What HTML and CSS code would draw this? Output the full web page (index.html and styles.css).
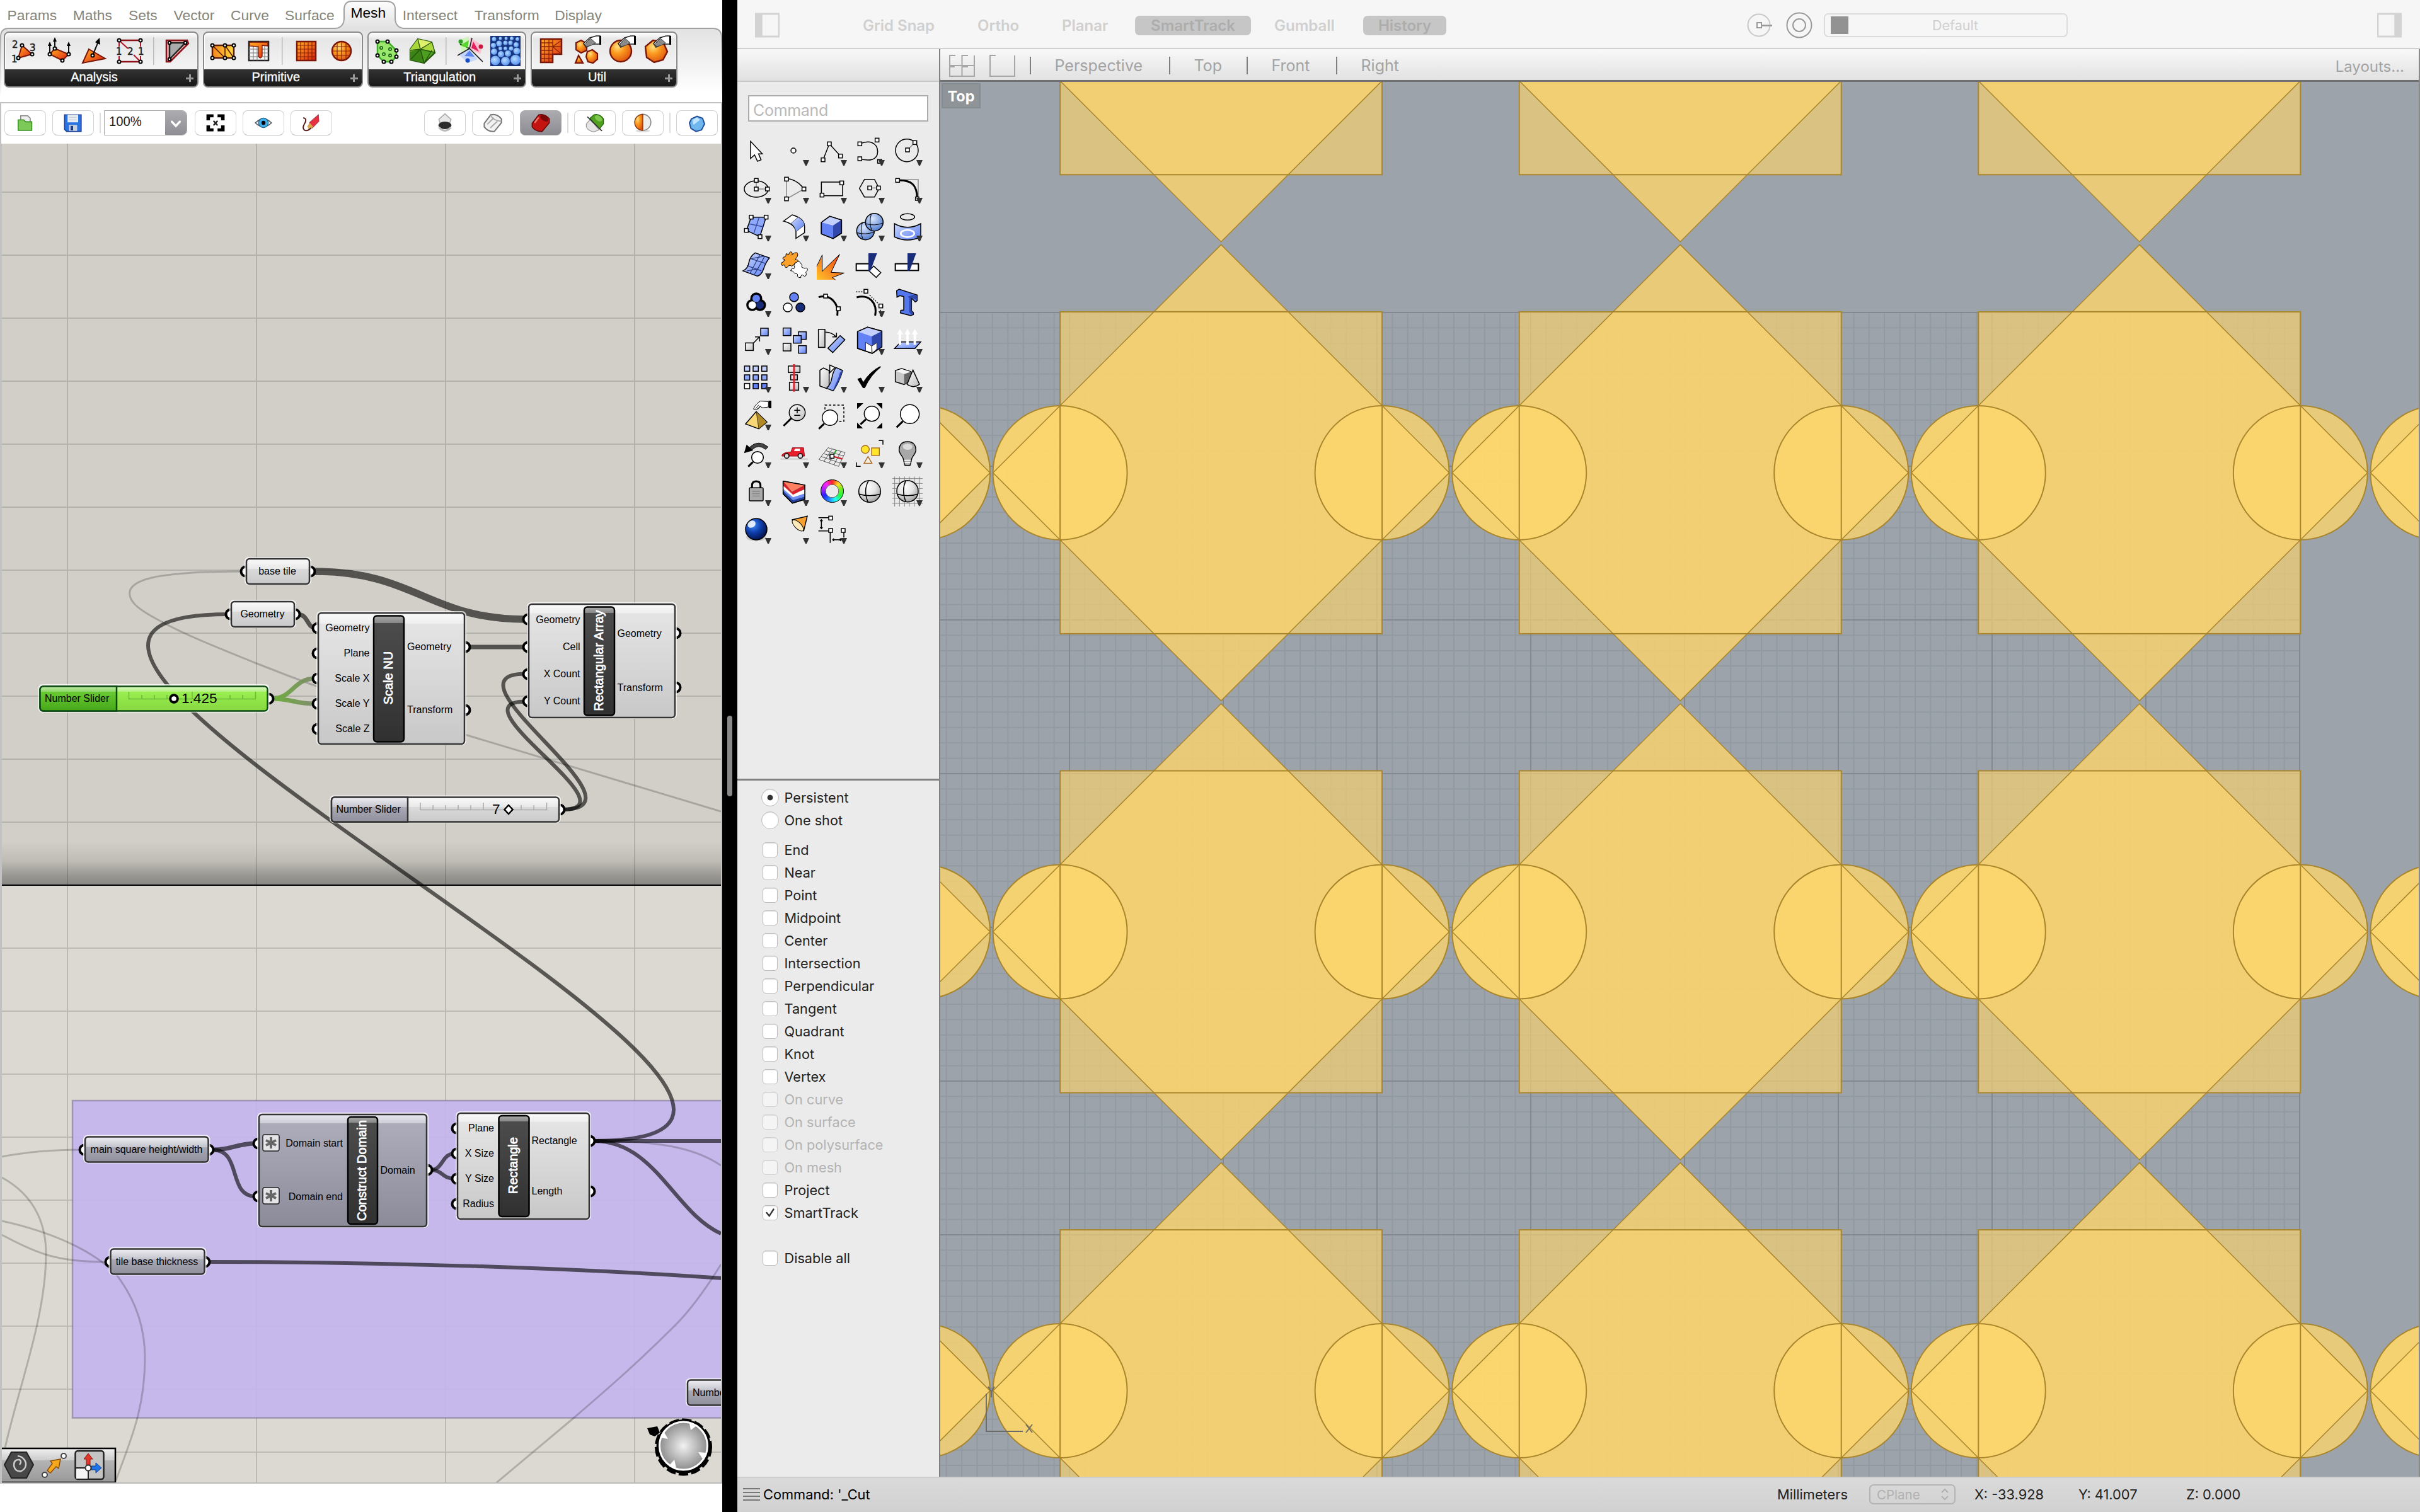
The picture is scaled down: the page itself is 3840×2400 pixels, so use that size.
FILE: index.html
```html
<!DOCTYPE html>
<html lang="en">
<head>
<meta charset="utf-8">
<title>Grasshopper and Rhino</title>
<link rel="stylesheet" href="styles.css">
</head>
<body>
<svg class="defs" width="0" height="0" aria-hidden="true">
  <defs>
    <linearGradient id="fire" x1="0" y1="0" x2="1" y2="1"><stop offset="0" stop-color="#ffb020"/><stop offset=".5" stop-color="#f0691c"/><stop offset="1" stop-color="#d81e10"/></linearGradient>
    <linearGradient id="gold" x1="0" y1="0" x2="1" y2="0"><stop offset="0" stop-color="#f5861f"/><stop offset="1" stop-color="#ffd83a"/></linearGradient>
    <radialGradient id="egg" cx=".35" cy=".3" r=".8"><stop offset="0" stop-color="#ffdf80"/><stop offset=".4" stop-color="#fb9a1e"/><stop offset="1" stop-color="#d9480f"/></radialGradient>
    <radialGradient id="bubble" cx=".4" cy=".4" r=".7"><stop offset="0" stop-color="#b5dcff"/><stop offset="1" stop-color="#4f8bf0"/></radialGradient>
    <linearGradient id="blue" x1="0" y1="0" x2="1" y2="1"><stop offset="0" stop-color="#cdd9ff"/><stop offset="1" stop-color="#5b7ff2"/></linearGradient>
    <linearGradient id="grey" x1="0" y1="0" x2="1" y2="1"><stop offset="0" stop-color="#fff"/><stop offset="1" stop-color="#bdbdbd"/></linearGradient>
    <radialGradient id="ball" cx=".4" cy=".3" r=".75"><stop offset="0" stop-color="#fff"/><stop offset=".5" stop-color="#e4e4e4"/><stop offset="1" stop-color="#999"/></radialGradient>
    <radialGradient id="bball" cx=".4" cy=".3" r=".75"><stop offset="0" stop-color="#dce8ff"/><stop offset="1" stop-color="#4a78cc"/></radialGradient>
    <radialGradient id="navy" cx=".35" cy=".3" r=".75"><stop offset="0" stop-color="#3f8bff"/><stop offset=".5" stop-color="#0e3da8"/><stop offset="1" stop-color="#020f44"/></radialGradient>
    <g id="hand"><path d="M0 12L10 3L20 0H26V13H14L4 18Z" fill="#fff" stroke="#222" stroke-width="1.5"/><path d="M3 12L11 4L19 11L12 15L4 17Z" fill="#8a8a8a" stroke="#444" stroke-width="1"/><path d="M25 0H28V14H25Z"/></g>
  </defs>
</svg>

<section class="gh">
  <header class="gh-head">
    <svg class="ribbon-shape" viewBox="0 0 1146 162">
      <defs><linearGradient id="rib" x1="0" y1="0" x2="0" y2="1"><stop offset="0" stop-color="#fdfdfd"/><stop offset=".28" stop-color="#e2e2e2"/><stop offset=".95" stop-color="#fff"/></linearGradient>
      <linearGradient id="ribs" x1="0" y1="0" x2="0" y2="1"><stop offset=".3" stop-color="#a2a2a2"/><stop offset="1" stop-color="#fff"/></linearGradient></defs>
      <path d="M1 155V57Q2 45 14 45H532Q545 44 546 30V14Q547 2 558 2H614Q627 3 627 14V30Q628 44 641 45H1132Q1145 46 1145 59V155" fill="url(#rib)" stroke="url(#ribs)" stroke-width="2"/>
    </svg>
    <nav class="tabs"><span>Params</span><span>Maths</span><span>Sets</span><span>Vector</span><span>Curve</span><span>Surface</span><span class="on">Mesh</span><span>Intersect</span><span>Transform</span><span>Display</span></nav>
    <div class="panels">
      <div class="panel p1"><div class="icons">
        <svg viewBox="0 0 56 58"><path d="M25 20L41 34L19 40Z" fill="url(#fire)" stroke="#7a1608" stroke-width="2"/><g class="dot"><circle cx="25" cy="20" r="2.5"/><circle cx="41" cy="34" r="2.5"/><circle cx="19" cy="40" r="2.5"/></g><g class="num"><text x="9" y="24">2</text><text x="37" y="29">3</text><text x="8" y="47">1</text></g></svg>
        <svg viewBox="0 0 56 58"><path d="M13 34L21 25L43 34L33 44Z" fill="url(#fire)" stroke="#7a1608" stroke-width="2"/><path d="M13 33V19M21 24V11M43 33V19" stroke="#111" stroke-width="2"/><path d="M10 21L13 14L16 21ZM18 14L21 7L24 14ZM40 21L43 14L46 21Z"/><g class="dot"><circle cx="13" cy="34" r="2.5"/><circle cx="21" cy="25" r="2.5"/><circle cx="43" cy="34" r="2.5"/><circle cx="33" cy="44" r="2.5"/></g></svg>
        <svg viewBox="0 0 56 58"><path d="M19 26L45 41L9 48Z" fill="url(#fire)" stroke="#7a1608" stroke-width="2"/><path d="M25 36L34 14" stroke="#111" stroke-width="2"/><path d="M36 8L37 19L29 15Z"/><g class="dot"><circle cx="25" cy="36" r="2.5"/></g></svg>
        <svg viewBox="0 0 56 58"><path d="M11 12H45M11 46H45" stroke="#8c1018" stroke-width="2.5"/><path d="M11 15V22M11 37V46M45 15V22M45 37V46M13 14L25 25M34 35L44 45" stroke="#b0182a" stroke-width="2" fill="none"/><g class="num"><text x="6" y="35">1</text><text x="24" y="35">2</text><text x="41" y="35">1</text></g><g class="dot"><circle cx="11" cy="12" r="2.5"/><circle cx="45" cy="12" r="2.5"/><circle cx="11" cy="46" r="2.5"/><circle cx="45" cy="46" r="2.5"/></g></svg>
        <i class="sep"></i>
        <svg viewBox="0 0 56 58"><path d="M11 12H44L46 17L17 46H11Z" fill="#f4b8b8" stroke="#8c1018" stroke-width="2.5"/><path d="M16 16H41L16 42Z" fill="#aaa" stroke="#222" stroke-width="2.5"/><g class="dot"><circle cx="16" cy="16" r="2.3"/><circle cx="41" cy="16" r="2.3"/><circle cx="16" cy="42" r="2.3"/></g></svg>
      </div><div class="cap">Analysis<b></b></div></div>
      <div class="panel p2"><div class="icons">
        <svg viewBox="0 0 56 58"><path d="M11 20H45V40H11Z" fill="url(#gold)" stroke="#5a1a08" stroke-width="2.5"/><path d="M31 20V40M11 20L31 40M31 20L45 40" stroke="#5a1a08" stroke-width="1.6"/><g class="dot"><circle cx="11" cy="20" r="2.5"/><circle cx="31" cy="20" r="2.5"/><circle cx="45" cy="20" r="2.5"/><circle cx="11" cy="40" r="2.5"/><circle cx="31" cy="40" r="2.5"/><circle cx="45" cy="40" r="2.5"/></g></svg>
        <svg viewBox="0 0 56 58"><path d="M13 14H44V44H13Z" fill="#f4f4f4" stroke="#222" stroke-width="2.5"/><path d="M20 14V44M26 14V44M38 14V44M13 26H44M13 32H44M13 38H44" stroke="#777"/><path d="M14 15H43V21L34 20V37Q31 43 28 37V22L14 21Z" fill="url(#fire)" stroke="#7a1608" stroke-width="1.3"/></svg>
        <i class="sep"></i>
        <svg viewBox="0 0 56 58"><path d="M14 14H44V44H14Z" fill="url(#fire)" stroke="#7a1608" stroke-width="2.5"/><path d="M20 14V44M26 14V44M32 14V44M38 14V44M14 20H44M14 26H44M14 32H44M14 38H44" stroke="#8a2408" stroke-width="1.2"/></svg>
        <svg viewBox="0 0 56 58"><circle cx="29" cy="29" r="15" fill="url(#egg)" stroke="#7a1608" stroke-width="2.5"/><path d="M22 16V42M29 14V44M36 16V42M16 22H42M14 29H44M16 36H42" stroke="#8a2408" stroke-width="1.2"/></svg>
      </div><div class="cap">Primitive<b></b></div></div>
      <div class="panel p3"><div class="icons">
        <svg viewBox="0 0 56 58"><path d="M12 14H28L42 28V38L34 46H22L12 36Z" fill="#9be86d" stroke="#3fae2a" stroke-width="2.5"/><g class="dot"><circle cx="12" cy="14" r="2.5"/><circle cx="28" cy="14" r="2.5"/><circle cx="42" cy="28" r="2.5"/><circle cx="42" cy="38" r="2.5"/><circle cx="34" cy="46" r="2.5"/><circle cx="22" cy="46" r="2.5"/><circle cx="12" cy="36" r="2.5"/></g><g fill="#d9ffc6" stroke="#207018" stroke-width="2"><circle cx="18" cy="24" r="2"/><circle cx="32" cy="26" r="2"/><circle cx="22" cy="34" r="2"/><circle cx="32" cy="36" r="2"/></g></svg>
        <svg viewBox="0 0 56 58"><path d="M20 10L42 15L47 32L30 48L8 43V26Z" fill="#4da01f" stroke="#24520c" stroke-width="2.2"/><path d="M20 10L42 15L24 26Z" fill="#dff06a"/><path d="M20 10L24 26L8 30V26ZM42 15L46 30L24 26Z" fill="#a9d63a"/><path d="M8 30L24 26L30 48L8 43Z" fill="#3c8416"/><path d="M20 10L24 26L42 15M8 28L24 26L46 31M24 26L30 48L42 28M24 26L9 42" fill="none" stroke="#24520c" stroke-width="1.3"/></svg>
        <i class="sep"></i>
        <svg viewBox="0 0 56 58"><path d="M10 12L26 6V26L14 30Z" fill="#cdf5b8"/><path d="M28 8L48 20L44 34L28 26Z" fill="#f9c0d0"/><path d="M10 34L26 26L40 42L24 48Z" fill="#c4d6fb"/><path d="M27 25L12 18M27 25L31 8M27 25L48 46M27 25L8 36" stroke="#222" stroke-width="1.6"/><path d="M12 20L24 24L26 12Z" fill="#58d42f"/><path d="M30 24L33 14L42 30Z" fill="#e6205c"/><path d="M19 37L27 28L35 38Z" fill="#5b86ee"/><circle cx="13" cy="14" r="3.5" fill="#2d9c22"/><circle cx="45" cy="22" r="3.5" fill="#c81840"/><circle cx="24" cy="44" r="3.5" fill="#184cc0"/></svg>
        <svg viewBox="0 0 56 58"><path d="M4 5H52V53H4Z" fill="#17347c"/><g fill="url(#bubble)"><circle cx="12" cy="44" r="7.5"/><circle cx="28" cy="45" r="7"/><circle cx="44" cy="43" r="8"/><circle cx="10" cy="30" r="5"/><circle cx="21" cy="34" r="5"/><circle cx="32" cy="33" r="5"/><circle cx="46" cy="29" r="5.5"/><circle cx="37" cy="25" r="3.5"/><circle cx="28" cy="25" r="3"/><circle cx="20" cy="25" r="3"/><circle cx="9" cy="20" r="4"/><circle cx="18" cy="17" r="4.5"/><circle cx="28" cy="16" r="3.5"/><circle cx="36" cy="16" r="3.5"/><circle cx="45" cy="19" r="4"/><circle cx="10" cy="10" r="3.5"/><circle cx="20" cy="9" r="2.5"/><circle cx="29" cy="9" r="2.5"/><circle cx="38" cy="9" r="3"/><circle cx="47" cy="10" r="3"/></g><path d="M4.500 5.500H51.500V52.500H4.500Z" fill="none" stroke="#17347c" stroke-dasharray="2 3"/></svg>
      </div><div class="cap">Triangulation<b></b></div></div>
      <div class="panel p4"><div class="icons">
        <svg viewBox="0 0 56 58"><path d="M12 10H45V34H31V47H12Z" fill="url(#fire)" stroke="#7a1608" stroke-width="2.5"/><path d="M18 10V47M25 10V47M31 10V34M12 16H31M12 22H45M12 28H31M12 34H31M12 41H31M31 22L45 12M31 22L45 34" stroke="#8a2408" stroke-width="1.3"/></svg>
        <svg viewBox="0 0 56 58"><path d="M12 16L20 12L29 17V28L20 32L12 27Z" fill="url(#egg)" stroke="#7a1608" stroke-width="2.2"/><path d="M16 36L23 48H11Z" fill="url(#egg)" stroke="#7a1608" stroke-width="2.2"/><path d="M30 30L38 27L46 33V42L39 48L31 46L28 38Z" fill="url(#egg)" stroke="#7a1608" stroke-width="2.2"/><use href="#hand" x="24" y="5"/></svg>
        <svg viewBox="0 0 56 58"><ellipse cx="27" cy="29" rx="17" ry="17" fill="url(#egg)" stroke="#7a1608" stroke-width="2.4"/><use href="#hand" x="23" y="5"/></svg>
        <svg viewBox="0 0 56 58"><path d="M22 12L38 14L45 30L38 43L24 47L12 39L10 22Z" fill="url(#egg)" stroke="#7a1608" stroke-width="2.4"/><use href="#hand" x="23" y="5"/></svg>
      </div><div class="cap">Util<b></b></div></div>
    </div>
  </header>

  <div class="gh-bar">
    <span class="btn"><svg viewBox="0 0 40 40"><path d="M11 6H25L30 11V24H11Z" fill="#eee" stroke="#888" stroke-width="2"/><path d="M6 14H17L21 18H33V35H6Z" fill="#7cc95a" stroke="#3c8f23" stroke-width="2"/></svg></span>
    <span class="btn"><svg viewBox="0 0 40 40"><path d="M3 4H36V37H7L3 33Z" fill="#2a73e0" stroke="#1c3f96" stroke-width="2"/><path d="M9 4H30V19H9Z" fill="#e8eef5"/><path d="M12 9H27M12 14H27" stroke="#bbb"/><path d="M12 24H28V36H12Z" fill="#c8d0dc"/><path d="M15 26H20V35H15Z" fill="#1d3a80"/></svg></span>
    <i class="tsep"></i>
    <span class="combo"><span>100%</span><svg viewBox="0 0 35 40"><path d="M11 17L17.500 24L24 17" fill="none" stroke="#fff" stroke-width="3.500" stroke-linecap="round"/></svg></span>
    <span class="btn"><svg viewBox="0 0 40 40"><path d="M2 15V3H16V9H9V15ZM38 15V3H24V9H31V15ZM2 25V37H16V31H9V25ZM38 25V37H24V31H31V25Z"/><path d="M16 16L24 25M24 16L16 25" stroke="#222" stroke-width="3"/></svg></span>
    <span class="btn"><svg viewBox="0 0 40 40"><path d="M4 20Q20 4 36 20Q20 36 4 20Z" fill="#e8f6ff" stroke="#555" stroke-width="2"/><circle cx="20" cy="20" r="9.500" fill="#3fb2ee" stroke="#245a80" stroke-width="1.500"/><circle cx="20" cy="20" r="4"/></svg></span>
    <span class="btn"><svg viewBox="0 0 40 40"><path d="M34 4L35 17L22 30L15 26L17 19Z" fill="#e83040" stroke="#b04050" stroke-width="1.500"/><path d="M17 20L24 28L15 33L12 27Z" fill="#d8a850"/><path d="M4 10Q11 11 8 19Q1 30 6 34Q11 38 20 30" fill="none" stroke="#5a1a18" stroke-width="2.500"/></svg></span>
    <span class="fill"></span>
    <span class="btn"><svg viewBox="0 0 40 40"><path d="M8 13L20 2L32 13L29 22H11Z" fill="#e8e8e8" stroke="#aaa" stroke-width="2"/><ellipse cx="20" cy="25" rx="13" ry="7.500" fill="#2c2c2c"/><path d="M8 29Q20 42 32 29" fill="none" stroke="#bbb" stroke-width="4"/></svg></span>
    <span class="btn"><svg viewBox="0 0 40 40"><path d="M3 21L16 4Q28 1 37 12V20L23 37Q10 38 3 28Z" fill="#f2f2f2" stroke="#777" stroke-width="2.500"/><path d="M16 5Q20 15 36 17M9 23L22 10M15 30L29 17" fill="none" stroke="#aaa" stroke-width="2.500"/></svg></span>
    <span class="btn sel"><svg viewBox="0 0 40 40"><path d="M3 21L16 4Q28 1 37 12V20L23 37Q10 38 3 28Z" fill="#c41412" stroke="#650808" stroke-width="2"/><ellipse cx="27" cy="11" rx="9" ry="5" transform="rotate(35 27 11)" fill="#7a0808"/><path d="M8 20L16 9" stroke="#f07a70" stroke-width="3"/></svg></span>
    <i class="tsep"></i>
    <span class="btn"><svg viewBox="0 0 40 40"><path d="M3 22L11 13L28 34L18 38Q6 36 3 28Z" fill="#e4e4e4" stroke="#999" stroke-width="1.500"/><path d="M10 11L18 4Q29 1 37 12V22L29 32Z" fill="#4fa01e" stroke="#24600a" stroke-width="1.500"/><ellipse cx="27" cy="11" rx="8" ry="5" transform="rotate(35 27 11)" fill="#7fc850"/><path d="M5 8L34 36" stroke="#333" stroke-width="2"/></svg></span>
    <span class="btn"><svg viewBox="0 0 40 40"><ellipse cx="20" cy="36" rx="14" ry="3" fill="#ddd"/><circle cx="20" cy="19" r="16" fill="#eee" stroke="#888" stroke-width="2"/><path d="M20 3A16 16 0 0 0 20 35Z" fill="url(#egg)" stroke="#8a3408" stroke-width="1.500"/></svg></span>
    <i class="tsep"></i>
    <span class="btn"><svg viewBox="0 0 40 40"><path d="M9 12L20 7L31 11L35 22L29 34L18 37L8 31L5 20Z" fill="#6fb6ee" stroke="#23509a" stroke-width="2.500"/><path d="M11 14L20 9L26 14L13 24Z" fill="#c0e4fc"/></svg></span>
  </div>

  <div class="canvas">
  <svg viewBox="3 228 1141 2126" width="1141" height="2126">
    <defs>
      <pattern id="g" x="106" y="204" width="300" height="100" patternUnits="userSpaceOnUse"><path d="M1 0V100M0 1H300" stroke="#000" stroke-opacity=".14" stroke-width="2"/></pattern>
      <linearGradient id="shade" x1="0" y1="0" x2="0" y2="1"><stop offset="0" stop-color="#000" stop-opacity="0"/><stop offset=".45" stop-color="#000" stop-opacity=".09"/><stop offset=".8" stop-color="#000" stop-opacity=".28"/><stop offset="1" stop-color="#000" stop-opacity=".34"/></linearGradient>
      <linearGradient id="nodeS" x1="0" y1="0" x2="0" y2="1"><stop offset="0" stop-color="#fafafa"/><stop offset=".4" stop-color="#e8e8e8"/><stop offset=".41" stop-color="#dadada"/><stop offset="1" stop-color="#c9c9c9"/></linearGradient>
      <linearGradient id="nodeL" x1="0" y1="0" x2="0" y2="1"><stop offset="0" stop-color="#fafafa"/><stop offset=".08" stop-color="#efefef"/><stop offset=".081" stop-color="#e4e4e4"/><stop offset="1" stop-color="#c8c8c8"/></linearGradient>
      <linearGradient id="dimS" x1="0" y1="0" x2="0" y2="1"><stop offset="0" stop-color="#efeff4"/><stop offset=".4" stop-color="#c4c4cd"/><stop offset=".41" stop-color="#aaaab6"/><stop offset="1" stop-color="#8f8f9d"/></linearGradient>
      <linearGradient id="dimL" x1="0" y1="0" x2="0" y2="1"><stop offset="0" stop-color="#e8e8f0"/><stop offset=".08" stop-color="#cdcdd8"/><stop offset=".081" stop-color="#acacba"/><stop offset="1" stop-color="#8b8b99"/></linearGradient>
      <linearGradient id="blk" x1="0" y1="0" x2="0" y2="1"><stop offset="0" stop-color="#aaa"/><stop offset=".055" stop-color="#888"/><stop offset=".056" stop-color="#4c4c4c"/><stop offset="1" stop-color="#303030"/></linearGradient>
      <linearGradient id="grnA" x1="0" y1="0" x2="0" y2="1"><stop offset="0" stop-color="#c2ecaa"/><stop offset=".22" stop-color="#8cd868"/><stop offset=".23" stop-color="#68c932"/><stop offset="1" stop-color="#46a818"/></linearGradient>
      <linearGradient id="grnB" x1="0" y1="0" x2="0" y2="1"><stop offset="0" stop-color="#dcfac8"/><stop offset=".22" stop-color="#b4f080"/><stop offset=".23" stop-color="#99ee50"/><stop offset="1" stop-color="#86d83e"/></linearGradient>
      <linearGradient id="gw" x1="0" y1="0" x2="1" y2="0"><stop offset="0" stop-color="#62ac2c"/><stop offset="1" stop-color="#7a8766"/></linearGradient>
      <radialGradient id="knob"><stop offset="0" stop-color="#f2f2f2"/><stop offset="1" stop-color="#8e8e8e"/></radialGradient>
      <linearGradient id="mini" x1="0" y1="0" x2="0" y2="1"><stop offset="0" stop-color="#f0f0f0"/><stop offset=".35" stop-color="#ccc"/><stop offset=".36" stop-color="#b4b4b4"/><stop offset="1" stop-color="#999"/></linearGradient>
    </defs>
    <rect x="0" y="228" width="1146" height="1177" fill="#d2cfc8"/>
    <rect x="0" y="1405" width="1146" height="950" fill="#dcd9d2"/>
    <rect x="0" y="228" width="1146" height="2127" fill="url(#g)"/>
    <rect x="0" y="1335" width="1146" height="70" fill="url(#shade)"/>
    <path d="M0 1405H1146" stroke="#000" stroke-width="2"/>
    <rect x="115" y="1747" width="1060" height="503.500" fill="#c4b5ec" fill-opacity=".93" stroke="#6a6088" stroke-opacity=".5" stroke-width="2.500"/>

    <g class="thin">
      <path d="M386 907C240 907 205.600 922 205.600 942C206 958 225 970 253 985C290 1006 340 1026 407 1053C510 1094 620 1132 738 1166L1144 1288"/>
      <path d="M3 1836Q60 1825 128 1825"/>
      <path d="M3 1869C60 1900 73 1950 73 1990C73 2090 30 2200 8 2298"/>
      <path d="M3 1938C80 1955 150 1985 186 2025C220 2070 230 2115 230 2155C230 2240 205 2290 184 2350"/>
      <path d="M3 1960C60 1990 90 2003 168 2003"/>
      <path d="M1144 2007C1110 2062 1085 2090 1071 2104C1010 2165 960 2208 910 2251L786 2355"/>
      <path d="M942 1811C1040 1811 1100 1820 1144 1850"/>
    </g>
    <g class="wire">
      <path d="M498 907C660 907 680 983 834 983" stroke-width="11.500"/>
      <path d="M942 1811C1548 1811 -244 975 362 975"/>
      <path d="M472 975C490 975 486 997 502 997" stroke-width="7"/>
      <path d="M744 1027H834" stroke-width="7"/>
      <path d="M892 1285C1040 1285 690 1069.500 834 1069.500"/>
      <path d="M892 1285C1010 1285 716 1113.500 834 1113.500"/>
      <path d="M337 1825C370 1825 375 1815 406 1815" stroke-width="7"/>
      <path d="M337 1825C385 1825 360 1899 406 1899"/>
      <path d="M683 1857C704 1857 700 1831 722 1831"/>
      <path d="M683 1857C704 1857 700 1871 722 1871"/>
      <path d="M942 1811H1146"/>
      <path d="M942 1811C1040 1811 1070 1925 1144 1958"/>
      <path d="M331 2003C600 2003 900 2012 1146 2029"/>
    </g>
    <g fill="none" stroke="url(#gw)" stroke-width="7" opacity=".9"><path d="M430 1109C465 1109 465 1077 500 1077"/><path d="M430 1109C465 1109 465 1117 500 1117"/></g>

    <g class="grip">
      <circle cx="390" cy="907" r="7.500"/><circle cx="492" cy="907" r="7.500"/>
      <circle cx="366" cy="975" r="7.500"/><circle cx="468" cy="975" r="7.500"/>
      <circle cx="504" cy="997" r="7.500"/><circle cx="504" cy="1037" r="7.500"/><circle cx="504" cy="1077" r="7.500"/><circle cx="504" cy="1117" r="7.500"/><circle cx="504" cy="1157" r="7.500"/>
      <circle cx="738" cy="1027" r="7.500"/><circle cx="738" cy="1127" r="7.500"/>
      <circle cx="838" cy="983" r="7.500"/><circle cx="838" cy="1027" r="7.500"/><circle cx="838" cy="1070" r="7.500"/><circle cx="838" cy="1113" r="7.500"/>
      <circle cx="1072" cy="1005" r="7.500"/><circle cx="1072" cy="1091" r="7.500"/>
      <circle cx="426" cy="1109" r="7.500"/><circle cx="888" cy="1285" r="7.500"/>
      <circle cx="134" cy="1825" r="7.500"/><circle cx="331" cy="1825" r="7.500"/>
      <circle cx="410" cy="1815" r="7.500"/><circle cx="410" cy="1899" r="7.500"/><circle cx="678" cy="1857" r="7.500"/>
      <circle cx="725" cy="1791" r="7.500"/><circle cx="725" cy="1831" r="7.500"/><circle cx="725" cy="1871" r="7.500"/><circle cx="725" cy="1911" r="7.500"/>
      <circle cx="936" cy="1811" r="7.500"/><circle cx="936" cy="1891" r="7.500"/>
      <circle cx="175" cy="2003" r="7.500"/><circle cx="325" cy="2003" r="7.500"/>
    </g>
    <g class="halo">
      <rect x="388" y="884" width="106" height="45" rx="7"/><rect x="364" y="952" width="106" height="45" rx="7"/><rect x="502" y="970" width="238" height="213" rx="7"/><rect x="836" y="956" width="238" height="185" rx="7"/><rect x="60.500" y="1086" width="367" height="45" rx="7"/><rect x="523" y="1262.500" width="367" height="44" rx="7"/><rect x="132" y="1801.500" width="201.500" height="45" rx="7"/><rect x="408" y="1766" width="272" height="183" rx="7"/><rect x="723" y="1764" width="215" height="173" rx="7"/><rect x="172.500" y="1979.500" width="155" height="45" rx="7"/><rect x="1088" y="2187.500" width="80" height="45" rx="7"/>
    </g>
    <g class="node">
      <rect x="391" y="887" width="100" height="40" rx="5" fill="url(#nodeS)"/>
      <rect x="367" y="955" width="100" height="40" rx="5" fill="url(#nodeS)"/>
      <rect x="505" y="973" width="232" height="208" rx="5" fill="url(#nodeL)"/>
      <rect x="839" y="959" width="232" height="180" rx="5" fill="url(#nodeL)"/>
      <rect x="135" y="1804.500" width="195.500" height="40" rx="5" fill="url(#dimS)"/>
      <rect x="411" y="1769" width="266" height="178" rx="5" fill="url(#dimL)"/>
      <rect x="726" y="1767" width="209" height="168" rx="5" fill="url(#nodeL)"/>
      <rect x="175.500" y="1982.500" width="149" height="40" rx="5" fill="url(#dimS)"/>
      <rect x="1091" y="2190.500" width="80" height="40" rx="5" fill="url(#dimS)"/>
      <rect x="526" y="1265.500" width="361" height="39" rx="5" fill="url(#nodeS)"/>
      <path d="M647 1265.500V1304.500H531Q526 1304.500 526 1299V1271Q526 1265.500 531 1265.500Z" fill="url(#dimS)"/>
    </g>
    <rect x="63.500" y="1089.500" width="361" height="39" rx="5" fill="url(#grnB)" stroke="#0b4a10" stroke-width="2.500"/>
    <path d="M185 1089.500V1128.500H69Q63.500 1128.500 63.500 1123V1095Q63.500 1089.500 69 1089.500Z" fill="url(#grnA)" stroke="#0b4a10" stroke-width="2.500"/>
    <g class="black">
      <rect x="593" y="977.500" width="48" height="200" rx="5"/><rect x="927" y="963.500" width="48" height="172" rx="5"/><rect x="552" y="1773" width="47" height="170" rx="5"/><rect x="791.500" y="1771" width="48" height="160" rx="5"/>
    </g>
    <path d="M204.500 1098V1109.500H405.500V1098M225 1103V1109M245 1103V1109M265 1103V1109M305 1098V1109M365 1103V1109M385 1103V1109" fill="none" stroke="#4c9a28" stroke-opacity=".6" stroke-width="1.500"/>
    <path d="M667 1274V1285.500H867.500V1274M687 1278V1285M707 1278V1285M727 1278V1285M747 1278V1285M767 1274V1285M827 1278V1285M847 1278V1285" fill="none" stroke="#aaa" stroke-width="1.500"/>
    <circle cx="276" cy="1109" r="5.800" fill="#fff" stroke="#000" stroke-width="4"/>
    <path d="M807 1278L813.500 1285L807 1292L800.500 1285Z" fill="#fff" stroke="#000" stroke-width="2.500"/>
    <g fill="#e4e4e8" stroke="#222" stroke-width="1.500"><rect x="417" y="1801" width="26" height="26" rx="3"/><rect x="417" y="1885" width="26" height="26" rx="3"/></g>
    <path d="M430 1805V1823M422 1810L438 1818M438 1810L422 1818M430 1889V1907M422 1894L438 1902M438 1894L422 1902" stroke="#666" stroke-width="4"/>
    <g class="lbl">
      <text x="440" y="912" class="mid">base tile</text><text x="416.500" y="980" class="mid">Geometry</text>
      <text x="586.500" y="1002" class="end">Geometry</text><text x="586.500" y="1042" class="end">Plane</text><text x="586.500" y="1082" class="end">Scale X</text><text x="586.500" y="1122" class="end">Scale Y</text><text x="586.500" y="1162" class="end">Scale Z</text>
      <text x="646" y="1032">Geometry</text><text x="646" y="1132">Transform</text>
      <text x="920.500" y="988.500" class="end">Geometry</text><text x="920.500" y="1032" class="end">Cell</text><text x="920.500" y="1075" class="end">X Count</text><text x="920.500" y="1118" class="end">Y Count</text>
      <text x="979.500" y="1011">Geometry</text><text x="979.500" y="1097">Transform</text>
      <text x="71" y="1114">Number Slider</text><text x="533.500" y="1290">Number Slider</text>
      <text x="232.500" y="1830" class="mid">main square height/width</text>
      <text x="544" y="1820" class="end">Domain start</text><text x="544" y="1905" class="end">Domain end</text><text x="603.500" y="1863">Domain</text>
      <text x="784" y="1796" class="end">Plane</text><text x="784" y="1836" class="end">X Size</text><text x="784" y="1876" class="end">Y Size</text><text x="784" y="1916" class="end">Radius</text>
      <text x="843.500" y="1816">Rectangle</text><text x="843.500" y="1896">Length</text>
      <text x="249" y="2008" class="mid">tile base thickness</text><text x="1099" y="2216">Number Slider</text>
    </g>
    <g class="val"><text x="288" y="1116">1.425</text><text x="781" y="1292">7</text></g>
    <g class="vert">
      <text transform="translate(623 1076) rotate(-90)">Scale NU</text>
      <text transform="translate(957 1048.500) rotate(-90)">Rectangular Array</text>
      <text transform="translate(581 1858) rotate(-90)">Construct Domain</text>
      <text transform="translate(821 1850) rotate(-90)">Rectangle</text>
    </g>
    <g>
      <path d="M1027 2267L1043 2264L1047 2274L1039 2280L1031 2277Z"/>
      <circle cx="1084.500" cy="2296" r="43"/><circle cx="1084.500" cy="2297" r="43" fill="none" stroke="#000" stroke-width="5" stroke-dasharray="15 5"/>
      <circle cx="1084.500" cy="2295" r="38" fill="url(#knob)" stroke="#fff" stroke-width="3"/>
      <path d="M1094 2259L1104 2264L1096 2270ZM1108 2305L1120 2306L1115 2316ZM1062 2326L1070 2317L1073 2330ZM1048 2282L1053 2272L1060 2284Z" fill="#fff"/>
    </g>
    <g>
      <rect x="0" y="2299" width="183" height="54" fill="url(#mini)" stroke="#000" stroke-width="2.500"/>
      <path d="M7 2325L18 2305H42L53 2325L42 2346H18Z" fill="#484848" stroke="#222" stroke-width="2"/>
      <path d="M31 2325Q35 2320 31 2317Q22 2316 22 2326Q24 2337 34 2335Q42 2331 41 2322Q38 2312 28 2311" fill="none" stroke="#ccc" stroke-width="2.500"/>
      <path d="M96 2316L93 2331L89 2328L80 2338L75 2334L83 2323L80 2319Z" fill="#f5a81c" stroke="#8a4c08" stroke-width="1.500"/>
      <g fill="#fff" stroke="#444" stroke-width="2"><circle cx="101" cy="2311" r="4"/><circle cx="71" cy="2341" r="4"/></g>
      <rect x="119.500" y="2303" width="45" height="45" rx="4" fill="#c4c4c4" stroke="#222" stroke-width="2.500"/>
      <path d="M121 2331H139V2347H121Z" fill="#f4f4f4"/>
      <path d="M120 2330H140V2347M140 2330V2348" fill="none" stroke="#222" stroke-width="2"/>
      <path d="M137 2325V2316H133L140 2307L147 2316H143V2325Z" fill="#e0392b" stroke="#8c1410"/><path d="M145 2327H152V2322L161 2330L152 2338V2333H145Z" fill="#1f74e8" stroke="#0c3890"/>
      <circle cx="140" cy="2330" r="4.500" fill="#fff" stroke="#333" stroke-width="2"/>
    </g>
  </svg>
  </div>
  <div class="gh-foot"></div>
</section>

<div class="split"><i></i></div>

<section class="rh">
  <header class="rh-head">
    <svg class="paneicon" viewBox="0 0 40 40"><path d="M0 0H40V40H0ZM12 3V37H37.500V3Z" fill="#d3d3d3" fill-rule="evenodd"/></svg>
    <div class="modes"><span>Grid Snap</span><span>Ortho</span><span>Planar</span><span class="on">SmartTrack</span><span>Gumball</span><span class="on hist">History</span></div>
    <div class="layer">
      <svg class="rings" viewBox="0 0 112 44"><circle cx="21" cy="22" r="17.500" fill="none" stroke="#c8c8c8" stroke-width="2"/><path d="M26 22.500H42" stroke="#999" stroke-width="2.500"/><rect x="18" y="18" width="7" height="8" fill="#fff" stroke="#999" stroke-width="2"/><circle cx="85" cy="22" r="19.500" fill="none" stroke="#999" stroke-width="2"/><circle cx="85" cy="22" r="10" fill="none" stroke="#999" stroke-width="2"/></svg>
      <span class="layerbox"><i></i><span>Default</span></span>
    </div>
    <svg class="paneicon last" viewBox="0 0 40 40"><path d="M0 0H40V40H0ZM2.500 3V37H28V3Z" fill="#d3d3d3" fill-rule="evenodd"/></svg>
  </header>

  <div class="rh-main">
    <aside>
      <div class="side-strip"></div>
      <div class="cmd">Command</div>
      <div class="tools">
        <div class="t"><svg viewBox="30 27 180 180"><path d="M93 73V155L112 138L126 168L143 161L131 133H149Z" fill="#fff" class="k"/></svg></div>
        <div class="t m"><svg viewBox="210 27 180 180"><circle cx="297" cy="117" r="12" fill="#fff" class="k"/></svg></div>
        <div class="t m"><svg viewBox="390 27 180 180"><path d="M438 161L468 85L521 143" class="k n"/><g class="h"><rect x="429" y="152" width="18" height="18"/><rect x="459" y="76" width="18" height="18"/><rect x="512" y="134" width="18" height="18"/></g></svg></div>
        <div class="t m"><svg viewBox="570 27 180 180"><path d="M613 85C660 65 697 80 698 123C697 165 655 168 613 156" class="k n"/><g class="h"><rect x="604" y="76" width="18" height="18"/><rect x="686" y="58" width="18" height="18"/><rect x="604" y="147" width="18" height="18"/><rect x="698" y="159" width="18" height="18"/></g></svg></div>
        <div class="t m"><svg viewBox="750 27 180 180"><circle cx="837" cy="116" r="54" class="k n"/><path d="M840 114L875 79" class="g"/><g class="h"><rect x="831" y="105" width="18" height="18"/><rect x="866" y="70" width="18" height="18"/></g></svg></div>

        <div class="t m"><svg viewBox="30 207 180 180"><ellipse cx="120" cy="300" rx="57" ry="39" class="k n"/><path d="M120 259V300H172" class="g"/><g class="h"><rect x="111" y="250" width="18" height="18"/><rect x="111" y="291" width="18" height="18"/><rect x="164" y="291" width="18" height="18"/></g></svg></div>
        <div class="t m"><svg viewBox="210 207 180 180"><path d="M264 253V347L347 300" class="g"/><path d="M264 250Q315 255 347 300" class="k n"/><g class="h"><rect x="255" y="244" width="18" height="18"/><rect x="338" y="291" width="18" height="18"/><rect x="255" y="338" width="18" height="18"/></g></svg></div>
        <div class="t m"><svg viewBox="390 207 180 180"><rect x="430" y="267" width="101" height="65" class="k n"/><g class="h"><rect x="518" y="262" width="18" height="18"/><rect x="424" y="320" width="18" height="18"/></g></svg></div>
        <div class="t m"><svg viewBox="570 207 180 180"><path d="M611 297L635 255H683L705 297L683 338H635Z" class="k n"/><path d="M660 295H700" class="g"/><g class="h"><rect x="651" y="286" width="18" height="18"/><rect x="693" y="286" width="18" height="18"/></g></svg></div>
        <div class="t m"><svg viewBox="750 207 180 180"><path d="M792 256H891V347" class="g"/><path d="M792 259C860 256 886 280 886 347" class="k n w9"/><g class="h"><rect x="784" y="250" width="18" height="18"/><rect x="878" y="338" width="16" height="16"/></g></svg></div>

        <div class="t m"><svg viewBox="30 387 180 180"><path d="M96 434L167 434L137 527L73 497Z" fill="#8ea8fb" class="k"/><path d="M134 434L108 512M86 466L154 480" stroke="#334a99" stroke-width="4"/><g class="h"><rect x="87" y="425" width="18" height="18"/><rect x="158" y="425" width="18" height="18"/><rect x="64" y="488" width="18" height="18"/><rect x="129" y="518" width="18" height="18"/></g></svg></div>
        <div class="t m"><svg viewBox="210 387 180 180"><path d="M250 453L291 423Q350 440 350 480V508L309 535V500Q300 465 250 453Z" fill="#fff" class="k"/><path d="M285 464L320 434Q352 455 349 472L309 504Q303 475 285 464Z" fill="url(#blue)" stroke="#222" stroke-width="2"/></svg></div>
        <div class="t m"><svg viewBox="390 387 180 180"><path d="M430 459L470 430L526 448V510L486 536L430 514Z" fill="#6181f5" class="k"/><path d="M430 459L470 430L526 448L486 474Z" fill="#c3cffc"/><path d="M486 474L526 448V510L486 536Z" fill="#3048ac"/><path d="M430 459L470 430L526 448V510L486 536L430 514Z" class="k n"/></svg></div>
        <div class="t m"><svg viewBox="570 387 180 180"><circle cx="640" cy="500" r="42" fill="url(#bball)" class="k"/><path d="M598 508Q640 520 680 505M625 461Q612 500 628 540" class="k n thin2"/><circle cx="682" cy="458" r="42" fill="url(#bball)" class="k"/><path d="M640 465Q682 478 724 462M668 418Q655 458 670 498" class="k n thin2"/></svg></div>
        <div class="t m"><svg viewBox="750 387 180 180"><ellipse cx="840" cy="433" rx="34" ry="15" class="k n"/><path d="M778 465Q840 500 903 465V528Q840 558 778 528Z" fill="url(#blue)" class="k"/><ellipse cx="840" cy="512" rx="32" ry="17" fill="none" stroke="#fff" stroke-width="8"/></svg></div>

        <div class="t m"><svg viewBox="30 567 180 180"><path d="M115 604L183 628Q165 650 155 680T125 715L57 690Q80 680 85 650T115 604Z" fill="url(#blue)" class="k"/><path d="M95 632L165 655M75 665L145 690M138 612Q118 650 90 702M160 620Q140 660 110 708M95 632L160 620M75 690L130 680" stroke="#24357a" stroke-width="3.500" fill="none"/></svg></div>
        <div class="t"><svg viewBox="210 567 180 180"><path d="M262 608L275 612Q278 596 288 600Q294 606 290 614Q302 600 314 603Q322 612 312 628Q305 632 308 638Q316 634 320 642Q318 652 308 650L290 668Q284 662 276 664L266 674Q258 676 256 668Q258 660 250 662Q240 668 238 656Q240 648 248 648L256 636Q240 634 250 624Q262 626 262 608Z" fill="#fba12a" class="k thin2"/><path d="M310 650Q322 640 328 648Q330 656 336 658Q340 662 336 672Q350 682 360 676Q368 680 362 690Q352 694 358 704Q360 714 350 716L338 708Q330 714 332 722Q322 724 316 716Q320 706 312 702Q304 706 298 696Q292 686 284 690Q286 676 298 680Q306 676 300 664Q300 656 310 650Z" fill="#fff" class="k thin2"/></svg></div>
        <div class="t"><svg viewBox="390 567 180 180"><defs><linearGradient id="boom" x1="0" y1="1" x2="1" y2="0"><stop offset="0" stop-color="#ffc42a"/><stop offset="1" stop-color="#f23a10"/></linearGradient></defs><path d="M408 732V668L434 618V692L516 613L476 697L537 700L482 722L497 732Z" fill="url(#boom)"/><path d="M408 668L434 614V692L517 611L476 697L538 700L482 722L497 732" class="k n thin2"/></svg></div>
        <div class="t"><svg viewBox="570 567 180 180"><rect x="596" y="656" width="62" height="32" fill="#fff" class="k s5"/><path d="M679 667L713 698L691 721L657 690Z" fill="#fff" class="k"/><path d="M654 606H695L663 690H654Z" fill="#182c78"/></svg></div>
        <div class="t"><svg viewBox="750 567 180 180"><rect x="782" y="656" width="110" height="32" fill="#fff" class="k s5"/><path d="M840 606H881L850 690H840Z" fill="#182c78"/></svg></div>

        <div class="t m"><svg viewBox="30 747 180 180"><g stroke="#000" stroke-width="17"><circle cx="120" cy="821" r="20"/><circle cx="101" cy="853" r="20"/><circle cx="138" cy="853" r="20"/></g><circle cx="101" cy="853" r="18" fill="#fff"/><circle cx="138" cy="853" r="18" fill="#182c78"/><circle cx="120" cy="821" r="18" fill="#6181f5"/></svg></div>
        <div class="t"><svg viewBox="210 747 180 180"><circle cx="300" cy="815" r="21" fill="#6181f5" class="k"/><circle cx="270" cy="864" r="21" fill="#fff" class="k"/><circle cx="330" cy="864" r="21" fill="#182c78" class="k"/></svg></div>
        <div class="t"><svg viewBox="390 747 180 180"><path d="M417 815C470 800 515 840 506 903" class="k n w9"/><g class="h"><rect x="441" y="801" width="18" height="18"/><rect x="502" y="861" width="18" height="18"/></g></svg></div>
        <div class="t m"><svg viewBox="570 747 180 180"><path d="M598 816C655 800 698 840 686 903" class="k n w9"/><path d="M595 790H628M660 805L705 850M711 875V905" class="k n" stroke-dasharray="6 6"/><g class="h"><rect x="633" y="778" width="18" height="18"/><rect x="704" y="848" width="18" height="18"/></g></svg></div>
        <div class="t"><svg viewBox="750 747 180 180"><path d="M788 785L800 777L886 805V832L877 838L859 820V880L868 888V898L855 903L806 890L808 878L822 876V812L803 808L790 815Z" fill="#5577ee" class="k"/><path d="M848 820V886L858 898L866 890L859 880V818L884 828V808L868 803L842 812Z" fill="#3048ac"/></svg></div>

        <div class="t m"><svg viewBox="30 -33 180 180"><rect x="141" y="3" width="36" height="36" fill="url(#blue)" class="k"/><rect x="69" y="73" width="37" height="36" fill="url(#grey)" class="k"/><path d="M106 74L134 46M114 44H136V66" class="k n"/></svg></div>
        <div class="t"><svg viewBox="210 -33 180 180"><g class="k" fill="url(#blue)"><rect x="248" y="2" width="37" height="36"/><rect x="321" y="20" width="37" height="36"/><rect x="297" y="38" width="37" height="36"/><rect x="321" y="86" width="37" height="36"/></g><rect x="248" y="75" width="37" height="36" fill="url(#grey)" class="k"/></svg></div>
        <div class="t"><svg viewBox="390 -33 180 180"><rect x="416" y="9" width="31" height="85" fill="url(#grey)" class="k"/><path d="M450 22Q480 22 500 44M482 44H502V24" class="k n"/><path d="M519 38L542 58L484 119L461 98Z" fill="url(#blue)" class="k"/></svg></div>
        <div class="t m"><svg viewBox="570 -33 180 180"><path d="M602 19L650 -2L718 17V92L672 123L602 99Z" fill="#6181f5" class="k"/><path d="M602 19L650 -2L718 17L670 42Z" fill="#c3cffc"/><path d="M670 42L718 17V92L672 123Z" fill="#3048ac"/><path d="M640 70L670 88V122L640 110ZM670 88L694 72V102L672 122Z" fill="#fff" stroke="#222" stroke-width="3"/><path d="M602 19L650 -2L718 17V92L672 123L602 99Z" class="k n"/></svg></div>
        <div class="t m"><svg viewBox="750 -33 180 180"><path d="M778 100L808 68H903L875 100Z" fill="url(#blue)" class="k"/><path d="M804 82V20M840 82V20M875 82V20" stroke="#fff" stroke-width="12"/><path d="M790 32L804 6L819 32ZM826 32L840 6L854 32ZM861 32L875 6L890 32Z" fill="#fff"/></svg></div>

        <div class="t m"><svg viewBox="30 147 180 180"><g class="k" fill="#c3cffc"><rect x="64" y="183" width="25" height="25"/><rect x="105" y="183" width="25" height="25"/><rect x="146" y="183" width="25" height="25"/><rect x="64" y="225" width="25" height="25" fill="#8ea8fb"/><rect x="105" y="225" width="25" height="25" fill="#8ea8fb"/><rect x="146" y="225" width="25" height="25" fill="#8ea8fb"/><rect x="64" y="266" width="25" height="25" fill="#fff"/><rect x="105" y="266" width="25" height="25" fill="#6181f5"/><rect x="146" y="266" width="25" height="25" fill="#6181f5"/></g></svg></div>
        <div class="t m"><svg viewBox="210 147 180 180"><g class="k" fill="url(#grey)"><rect x="273" y="183" width="55" height="31"/><rect x="284" y="225" width="32" height="24"/><rect x="278" y="261" width="44" height="37"/></g><path d="M300 174V305" stroke="#e01a2c" stroke-opacity=".85" stroke-width="11"/></svg></div>
        <div class="t m"><svg viewBox="390 147 180 180"><path d="M470 178L495 190L470 215Z" fill="#fff" class="k"/><path d="M423 203L440 192L467 205V275L455 290L423 278Z" fill="url(#grey)" class="k"/><path d="M500 190L531 204Q525 230 510 260T486 301L455 289Q475 270 480 240T500 190Z" fill="url(#blue)" class="k"/><path d="M519 212L531 205Q525 230 510 260T486 301Q492 280 502 260T519 212Z" fill="#3048ac"/></svg></div>
        <div class="t m"><svg viewBox="570 147 180 180"><path d="M603 245L618 240L629 262Q660 210 710 185L712 188Q665 225 636 287L628 286Z" stroke="#000" stroke-width="3"/></svg></div>
        <div class="t m"><svg viewBox="750 147 180 180"><path d="M782 205L812 195L857 210V250L824 271L782 258Z" fill="#c8c8c8" class="k"/><path d="M784 206L812 197L854 210L824 221Z" fill="#f4f4f4"/><path d="M824 222L857 210V250L824 271Z" fill="#666"/><path d="M866 202L897 270Q868 292 838 270Z" fill="url(#grey)" class="k"/></svg></div>

        <div class="t m"><svg viewBox="30 327 180 180"><path d="M107 388Q115 365 140 350L178 352V378L150 382L140 376L120 391Z" fill="#fff" class="k thin2"/><path d="M117 386L132 368M126 390L140 372" stroke="#000" stroke-width="3"/><path d="M179 348H192V384H179Z"/><path d="M120 400L171 450L132 482L69 459Z" fill="#f9d676" class="k"/><path d="M120 400L171 450L132 482Z" fill="#b08a26" stroke="#000" stroke-width="2"/></svg></div>
        <div class="t"><svg viewBox="210 327 180 180"><path d="M250 468L288 431" class="k n w9"/><circle cx="315" cy="405" r="38" fill="url(#grey)" class="k"/><path d="M301 394H329M315 380V408M301 418H329" class="k n"/></svg></div>
        <div class="t"><svg viewBox="390 327 180 180"><path d="M447 390V369H537V447H505" class="k n" stroke-dasharray="11 9"/><path d="M418 482L443 458" class="k n w9"/><circle cx="471" cy="429" r="37" fill="#fff" class="k"/></svg></div>
        <div class="t"><svg viewBox="570 327 180 180"><path d="M600 388V360H630ZM720 388V360H692ZM600 452V480H628ZM720 452V480H692Z"/><path d="M616 461L642 437" class="k n w9"/><circle cx="670" cy="410" r="36" fill="#fff" class="k"/></svg></div>
        <div class="t"><svg viewBox="750 327 180 180"><path d="M788 475L818 446" class="k n w9"/><circle cx="851" cy="412" r="45" fill="#fff" class="k"/></svg></div>

        <div class="t m"><svg viewBox="30 507 180 180"><path d="M62 598L74 557L105 585Z"/><path d="M88 570Q130 530 176 568L165 580Q130 552 100 582Z" fill="#444" class="k thin2"/><path d="M82 662L104 640" class="k n w9"/><circle cx="126" cy="618" r="28" fill="#fff" class="k"/></svg></div>
        <div class="t m"><svg viewBox="210 507 180 180"><path d="M236 626H365" stroke="#aaa" stroke-width="4"/><path d="M242 612Q240 595 285 592L292 572H345L350 612Z" fill="#e8202e" stroke="#9c0c18" stroke-width="3"/><path d="M300 588L304 577H328V588Z" fill="#fff"/><g fill="#ddd" class="k"><circle cx="265" cy="611" r="11"/><circle cx="330" cy="611" r="11"/></g></svg></div>
        <div class="t m"><svg viewBox="390 507 180 180"><path d="M462 572L543 595L512 661L418 628ZM482 578L442 636M503 584L466 645M523 590L490 653M451 586L535 611M440 600L528 628M429 614L520 645" fill="none" stroke="#555" stroke-width="3"/><path d="M481 612L530 625" stroke="#d81e2c" stroke-width="6"/><path d="M488 605L501 583" stroke="#2ea02c" stroke-width="6"/><rect x="471" y="603" width="19" height="19" class="k" fill="#fff"/></svg></div>
        <div class="t m"><svg viewBox="570 507 180 180"><path d="M703 538H723V557M597 642V661H617" class="k n"/><g stroke="#a8661c" stroke-width="4"><circle cx="639" cy="580" r="19" fill="#ffe52c"/><rect x="669" y="573" width="37" height="36" fill="#ffe52c"/><path d="M652 614L671 646H633Z" fill="#f4efe0"/></g></svg></div>
        <div class="t m"><svg viewBox="750 507 180 180"><path d="M840 543C870 543 880 563 880 582C880 605 858 612 858 635L852 656H828L822 635C822 612 800 605 800 582C800 563 810 543 840 543Z" fill="#a8a8a8" class="k"/><path d="M818 560Q840 545 862 560Q868 580 840 582Q815 580 818 560Z" fill="#dcdcdc"/><path d="M824 632H856M826 643H854" stroke="#fff" stroke-width="5"/></svg></div>

        <div class="t m"><svg viewBox="30 687 180 180"><path d="M100 762V750Q101 732 120 732Q139 732 140 750V762" class="k n w9"/><rect x="87" y="763" width="66" height="62" rx="4" fill="#aaa" class="k"/><path d="M101 780H138M101 791H138M101 802H138" stroke="#888" stroke-width="4"/></svg></div>
        <div class="t m"><svg viewBox="210 687 180 180"><path d="M248 731L351 750V818L292 836L248 792Z" fill="#23439c" class="k"/><path d="M248 762L295 800L351 785V805L295 822L248 778Z" fill="#6f8cf0"/><path d="M248 752L295 790L351 770V790L295 808L248 768Z" fill="#fff"/><path d="M290 782L351 750V768L295 796L248 752V731Z" fill="#d8202a"/><path d="M248 731L351 750L290 782Z" fill="#ff8060"/><path d="M248 731L351 750V818L292 836L248 792Z" class="k n"/></svg></div>
        <div class="t m"><span class="wheel"></span></div>
        <div class="t"><svg viewBox="570 687 180 180"><circle cx="660" cy="780" r="52" fill="url(#ball)" class="k"/><path d="M609 793Q660 808 711 793M655 728Q628 775 652 831" class="k n"/></svg></div>
        <div class="t m"><svg viewBox="750 687 180 180"><path d="M779 709V852M802 709V852M826 709V852M849 709V852M873 709V852M897 709V852M768 719H912M768 742H912M768 766H912M768 790H912M768 813H912M768 837H912" stroke="#888" stroke-width="3"/><circle cx="840" cy="779" r="51" fill="url(#ball)" class="k"/><path d="M790 793Q840 808 891 793M832 728Q810 775 832 830" class="k n"/></svg></div>

        <div class="t m"><svg viewBox="30 867 180 180"><ellipse cx="120" cy="1000" rx="48" ry="18" fill="#bbb" opacity=".6"/><circle cx="120" cy="960" r="51" fill="url(#navy)" class="k"/><ellipse cx="98" cy="936" rx="20" ry="16" fill="#fff" fill-opacity=".85" transform="rotate(-35 98 936)"/></svg></div>
        <div class="t m"><svg viewBox="210 867 180 180"><path d="M291 915L363 898L346 968Q305 955 291 915Z" fill="#f8a030" class="k"/><ellipse cx="318" cy="942" rx="35" ry="15" transform="rotate(45 318 942)" fill="#fde9b8" class="k thin2"/></svg></div>
        <div class="t m"><svg viewBox="390 867 180 180"><path d="M416 905H466M416 968H466M472 975V1025M537 975V1000M430 915V955M484 1010H528M424 922L430 915L436 922M424 950L430 957L436 950M490 1004L484 1010L490 1016M518 1004L524 1010L518 1016" class="k n"/><g class="h"><rect x="465" y="898" width="18" height="18"/><rect x="465" y="957" width="18" height="18"/><rect x="525" y="957" width="18" height="18"/></g></svg></div>
      </div>
      <div class="snaps">
        <label class="r on"><i></i>Persistent</label><label class="r"><i></i>One shot</label>
        <div class="checks">
        <label><i></i>End</label><label><i></i>Near</label><label><i></i>Point</label><label><i></i>Midpoint</label><label><i></i>Center</label><label><i></i>Intersection</label><label><i></i>Perpendicular</label><label><i></i>Tangent</label><label><i></i>Quadrant</label><label><i></i>Knot</label><label><i></i>Vertex</label>
        <label class="off"><i></i>On curve</label><label class="off"><i></i>On surface</label><label class="off"><i></i>On polysurface</label><label class="off"><i></i>On mesh</label><label><i></i>Project</label>
        <label><i><svg viewBox="0 0 24 24"><path d="M6 12L10.500 17.500L18 6" fill="none" stroke="#333" stroke-width="2.600" stroke-linecap="round"/></svg></i>SmartTrack</label>
        <label class="gap"><i></i>Disable all</label>
        </div>
      </div>
    </aside>

    <main>
      <nav class="views">
        <svg viewBox="0 0 106 36"><path d="M10 1H1V34H40V1M20.500 34V1H30M1 17H40M1 19H9M21 19H30" fill="none" stroke="#a6a6a6" stroke-width="2"/><path d="M74 1H65V34H104V1" fill="none" stroke="#a6a6a6" stroke-width="2"/></svg>
        <span class="v1">Perspective</span><span class="v2">Top</span><span class="v3">Front</span><span class="v4">Right</span><span class="lay">Layouts...</span>
      </nav>
      <div class="view">
        <svg viewBox="1492 130 2346 2214" width="2346" height="2214">
          <defs>
            <pattern id="minor" x="1696" y="495" width="24.400" height="24.400" patternUnits="userSpaceOnUse"><path d="M1 0V24.400M0 1H24.400" stroke="#9199a1" stroke-width="2"/></pattern>
            <pattern id="major" x="1696" y="495" width="244" height="244" patternUnits="userSpaceOnUse"><path d="M1 0V244M0 1H244" stroke="#838993" stroke-width="2"/></pattern>
            <g id="tile">
              <rect x="-255.500" y="-255.500" width="511" height="511" fill="#f5d070" fill-opacity=".7"/>
              <path d="M0 -362L362 0L0 362L-362 0Z" fill="#f5d070" fill-opacity=".86"/>
              <circle cx="-255.500" r="106.500" fill="#fcd66d" fill-opacity=".92"/>
              <circle cx="255.500" r="106.500" fill="#fcd66d" fill-opacity=".78"/>
              <g fill="none" stroke="#a9852b" stroke-width="2"><rect x="-255.500" y="-255.500" width="511" height="511"/><circle cx="-255.500" r="106.500"/><circle cx="255.500" r="106.500"/><path d="M0 -362L362 0L0 362L-362 0Z" stroke-width="1.500"/></g>
            </g>
            <g id="row"><use href="#tile" x="1209"/><use href="#tile" x="1937.600"/><use href="#tile" x="2666.200"/><use href="#tile" x="3394.800"/><use href="#tile" x="4123.400"/></g>
          </defs>
          <rect x="1492" y="130" width="2346" height="2214" fill="#9ca3ab"/>
          <rect x="1492" y="495" width="2158" height="1849" fill="url(#minor)"/><rect x="1492" y="495" width="2158" height="1849" fill="url(#major)"/>
          <use href="#row" y="21.800"/><use href="#row" y="750.400"/><use href="#row" y="1479"/><use href="#row" y="2207.600"/>
          <path d="M1565 2212V2272H1623M1628 2261L1638 2274M1638 2261L1628 2274M1568 2201L1573 2209L1578 2201M1573 2209V2218" fill="none" stroke="#6a6a66" stroke-width="1.800"/>
        </svg>
        <b class="vlabel">Top</b>
      </div>
    </main>
  </div>

  <footer>
    <svg viewBox="0 0 28 22"><path d="M0 2H27M0 8H27M0 14H27M0 20H27" stroke="#777" stroke-width="2"/></svg>
    <span class="c0">Command: '_Cut</span><span class="c1">Millimeters</span>
    <span class="cplane">CPlane<svg viewBox="0 0 14 22"><path d="M2 8L7 3L12 8M2 14L7 19L12 14" fill="none" stroke="#b0b0b0" stroke-width="2"/></svg></span>
    <span class="c2">X: -33.928</span><span class="c3">Y: 41.007</span><span class="c4">Z: 0.000</span>
  </footer>
</section>
</body>
</html>
```
FILE: styles.css
```css
* { box-sizing: border-box; }
body { margin: 0; width: 3840px; height: 2400px; display: flex; overflow: hidden; background: #fff; font-family: Inter, "Liberation Sans", sans-serif; }
svg { display: block; }
.defs { position: absolute; }

/* Grasshopper window */
.gh { width: 1146px; display: flex; flex-direction: column; background: #fff; font-family: "Liberation Sans", Arial, sans-serif; }
.gh-head { position: relative; height: 162px; }
.ribbon-shape { position: absolute; left: 0; top: 0; width: 1146px; height: 162px; }
.tabs { position: relative; height: 50px; padding-left: 11.500px; display: grid; grid-template-columns: 104.300px 88.300px 71.500px 90.500px 86px 104.300px 82.300px 114px 127.500px 100px; font-size: 22.800px; line-height: 48px; color: #85857a; }
.tabs .on { color: #000; line-height: 40px; }
.panels { position: relative; display: flex; gap: 7px; padding-left: 6px; }
.panel { height: 89px; border: 2px solid #8a8a8a; border-radius: 8px; overflow: hidden; background: linear-gradient(#fff, #e6e6e6 12%, #f2f2f2 60%); box-shadow: inset 0 0 0 1px #fff; display: flex; flex-direction: column; }
.p1 { width: 309px; }
.p2 { width: 253.500px; }
.p3 { width: 252.500px; }
.p4 { width: 233px; }
.icons { display: flex; padding: 0 2px; height: 58px; }
.icons svg { width: 56px; height: 58px; flex: none; }
.sep { width: 19px; background: linear-gradient(#bbb, #bbb) center / 1.500px 44px no-repeat; }
.cap { position: relative; flex: 1; background: linear-gradient(#333, #181818); color: #fff; font-size: 20px; line-height: 25px; text-align: center; -webkit-text-stroke: .3px #fff; padding-right: 22px; }
.cap b { position: absolute; right: 6px; top: 8px; width: 12px; height: 12px; background: linear-gradient(#999, #999) center / 3px 12px no-repeat, linear-gradient(#999, #999) center / 12px 3px no-repeat; }
.dot { fill: #fff; stroke: #000; stroke-width: 2; }
.num { font: 15px "DejaVu Sans", sans-serif; fill: #222; stroke: #222; stroke-width: .5; }
.gh-bar { height: 66px; border-top: 2px solid #c2c2c2; border-left: 2px solid #c2c2c2; border-right: 2px solid #c2c2c2; display: flex; align-items: center; gap: 10px; padding: 0 5px 3px; background: #fff; }
.btn { width: 66px; height: 40px; border: 1.500px solid #d2d2d2; border-bottom-color: #b8b8b8; border-radius: 8px; display: flex; justify-content: center; align-items: center; background: #fff; }
.btn svg { width: 32px; height: 32px; }
.btn.sel { background: linear-gradient(#acabb0, #8d8c92); border-color: #aaa; }
.tsep { width: 2px; height: 32px; background: #ddd; margin: 0 -1px; }
.combo { width: 132px; height: 40px; border: 1.500px solid #aaa; border-radius: 0 8px 8px 0; display: flex; justify-content: space-between; font-size: 22px; line-height: 33px; color: #222; padding-left: 7px; margin-right: 2px; margin-left: -4px; overflow: hidden; }
.combo span { transform: scaleX(.92); transform-origin: left; }
.combo svg { width: 34px; height: 40px; background: linear-gradient(#acabb0, #8d8c92); }
.fill { flex: 1; }
.canvas { height: 2127px; border-left: 3px solid #c2c2c2; border-right: 2px solid #c2c2c2; border-bottom: 2px solid #bbb; overflow: hidden; }
.gh-foot { flex: 1; background: #fff; }
.thin { fill: none; stroke: #000; stroke-opacity: .2; stroke-width: 3; }
.wire { fill: none; stroke: #000; stroke-opacity: .6; stroke-width: 6; }
.grip { fill: #fff; stroke: #000; stroke-width: 4; }
.halo { fill: #fff; fill-opacity: .75; }
.node { stroke: #333; stroke-width: 2.500; }
.black { fill: url(#blk); stroke: #000; stroke-width: 2.500; }
.lbl { font: 16px "Liberation Sans", Arial, sans-serif; fill: #000; }
.mid { text-anchor: middle; }
.end { text-anchor: end; }
.val { font: 22.600px "Liberation Sans", Arial, sans-serif; }
.vert { font: 20px "Liberation Sans", Arial, sans-serif; fill: #fff; stroke: #fff; stroke-width: .7; text-anchor: middle; }

.split { width: 24px; background: #000; padding: 1136px 0 0 8px; }
.split i { display: block; width: 8px; height: 128px; border-radius: 4px; background: #8a8a8a; }

/* Rhino window */
.rh { width: 2670px; display: flex; flex-direction: column; }
.rh-head { height: 78px; background: #f6f6f6; border-bottom: 2px solid #cfcfcf; display: flex; align-items: flex-start; padding-top: 20px; }
.paneicon { width: 39px; height: 40px; margin-left: 28px; }
.paneicon.last { margin-left: 491px; }
.modes { display: flex; margin: 5px 0 0 110px; font-size: 24px; font-weight: 600; color: #d0d0d0; line-height: 32px; }
.modes span { padding-left: 22px; height: 31px; width: 182px; white-space: nowrap; }
.modes span:nth-child(2) { width: 134px; }
.modes span:nth-child(3) { width: 138px; }
.modes span.on { background: #c6c6c6; color: #adadad; border-radius: 7px; width: 184px; text-align: center; padding: 0; }
.modes span:nth-child(5) { width: 178px; padding-left: 37px; }
.modes span.hist { width: 132px; }
.layer { display: flex; margin: -2px 0 0 475px; }
.rings { width: 112px; height: 44px; }
.layerbox { display: flex; align-items: center; width: 387px; height: 38px; margin: 3px 0 0 12px; border: 2px solid #dcdcdc; border-radius: 7px; font-size: 21.500px; color: #d0d0d0; }
.layerbox i { width: 28px; height: 28px; margin-left: 9px; background: #929292; }
.layerbox span { margin-left: 133px; }
.rh-main { height: 2266px; display: flex; }
aside { width: 322px; border-right: 2px solid #808080; background: #ebebeb; }
.side-strip { height: 52px; background: linear-gradient(#f8f8f8, #e1e1e1); border-bottom: 2px solid #c8c8c8; }
.cmd { width: 286px; height: 42px; margin: 21px 0 16px 17px; border: 2px solid #acacac; background: #fff; color: #b9b9b9; font-size: 25px; line-height: 44px; padding-left: 6px; letter-spacing: -.3px; }
.tools { display: grid; grid-template-columns: repeat(5, 60px); grid-auto-rows: 60px; height: 1030px; border-bottom: 3px solid #808080; }
.t { position: relative; }
.t svg { width: 60px; height: 60px; }
.t.m::after { content: ""; position: absolute; left: 44px; top: 45px; width: 10px; height: 9px; background: #333; clip-path: polygon(0 0, 100% 0, 60% 100%, 40% 100%); }
.k { stroke: #000; stroke-width: 4.500; stroke-linejoin: miter; }
.n { fill: none; }
.s5 { stroke-width: 6; }
.w9 { stroke-width: 9; }
.thin2 { stroke-width: 3; }
.g { fill: none; stroke: #888; stroke-width: 4.500; }
.h { fill: #fff; stroke: #000; stroke-width: 4.500; }
.wheel { position: absolute; left: 11.500px; top: 12px; width: 37px; height: 37px; border-radius: 50%; border: 1.500px solid #000; background: radial-gradient(circle, #ebebeb 0 9.500px, #777 10px 10.500px, transparent 11px), conic-gradient(#f22, #fd2, #6e2, #2f4, #2ff, #28f, #22f, #a2f, #f2f, #f22); }
.snaps { padding: 9px 0 0 40px; font-size: 21.700px; color: #222; }
.snaps label { display: flex; align-items: center; height: 36px; }
.snaps i { width: 24px; height: 24px; margin-right: 10.500px; background: #fff; border: 1.500px solid #bdbdbd; border-radius: 5px; box-shadow: inset 0 1px 1px #ddd; }
.snaps .r i { width: 28px; height: 28px; margin: 0 8.500px 0 -2px; border-radius: 50%; }
.snaps .r.on i { background: radial-gradient(circle, #333 0 4px, #fff 4.800px); }
.checks { padding-top: 11px; }
.snaps .off { color: #b3b3b3; }
.snaps .off i { background: #f4f4f4; border-color: #cfcfcf; }
.snaps .gap { margin-top: 36px; }
main { width: 2348px; border-right: 2px solid #8a8a8a; }
.views { height: 52px; display: flex; align-items: flex-start; background: linear-gradient(#f9f9f9, #e1e1e1); border-bottom: 3px solid #6f7072; font-size: 25px; color: #a3a3a3; line-height: 28px; padding-top: 12px; }
.views svg { width: 106px; height: 36px; margin: -3px 0 0 14px; }
.views span { border-left: 2px solid #808080; padding-left: 37.500px; }
.v1 { margin-left: 22px; width: 221px; }
.v2 { width: 123px; }
.v3 { width: 142px; }
.views .lay { border: 0; padding: 0; margin-left: auto; margin-right: 23px; font-size: 24px; padding-top: 2px; }
.view { position: relative; height: 2214px; }
.vlabel { position: absolute; left: 2px; top: 2px; width: 62px; height: 40px; background: #8f9498; border: 2px solid #868c90; color: #fff; font-size: 23.500px; line-height: 38px; text-align: center; }
footer { height: 56px; background: linear-gradient(#dadada, #d1d1d1); border-top: 2px solid #cdcdcd; display: flex; align-items: center; padding: 2px 0 4px 9px; font-size: 21.800px; color: #222; white-space: nowrap; }
footer > svg { width: 28px; height: 22px; }
.c0 { margin-left: 4px; width: 1609px; color: #000; }
.c1 { width: 146px; }
.cplane { width: 137px; height: 32px; border: 2px solid #b4b4b4; border-radius: 7px; color: #b0b0b0; display: flex; align-items: center; justify-content: space-between; padding: 0 8px 0 10px; font-size: 20.500px; }
.cplane svg { width: 14px; height: 22px; }
.c2 { margin-left: 30px; width: 165px; }
.c3 { width: 171px; }
```
